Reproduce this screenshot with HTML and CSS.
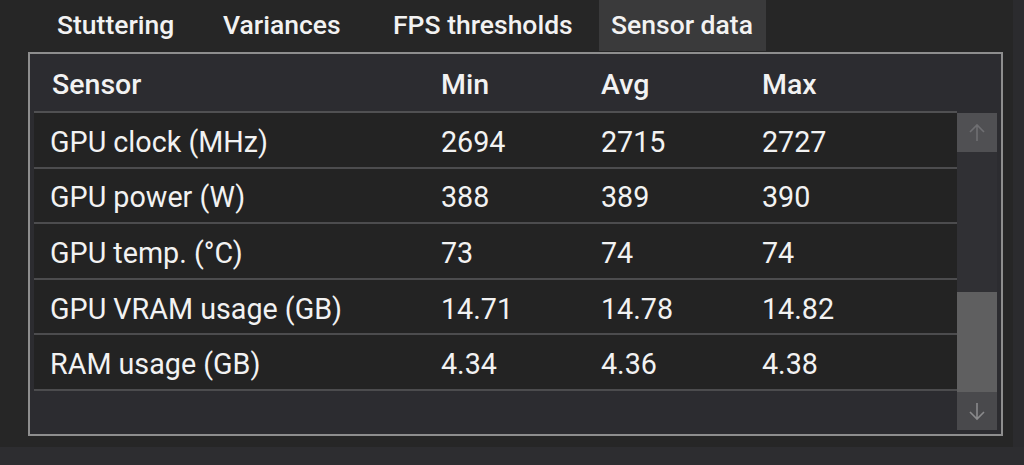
FILE: index.html
```html
<!DOCTYPE html>
<html>
<head>
<meta charset="utf-8">
<link rel="stylesheet" href="styles.css">
</head>
<body>
<div class="page">
  <div class="main">
    <div class="tabs">
      <div class="tab tab-1">Stuttering</div>
      <div class="tab tab-2">Variances</div>
      <div class="tab tab-3">FPS thresholds</div>
      <div class="tab tab-4 active">Sensor data</div>
    </div>
    <div class="box">
      <div class="head">
        <div class="c c-name">Sensor</div>
        <div class="c c-min">Min</div>
        <div class="c c-avg">Avg</div>
        <div class="c c-max">Max</div>
      </div>
      <div class="body">
        <div class="rows">
          <div class="row"><div class="c c-name">GPU clock (MHz)</div><div class="c c-min">2694</div><div class="c c-avg">2715</div><div class="c c-max">2727</div></div>
          <div class="row"><div class="c c-name">GPU power (W)</div><div class="c c-min">388</div><div class="c c-avg">389</div><div class="c c-max">390</div></div>
          <div class="row"><div class="c c-name">GPU temp. (°C)</div><div class="c c-min">73</div><div class="c c-avg">74</div><div class="c c-max">74</div></div>
          <div class="row"><div class="c c-name">GPU VRAM usage (GB)</div><div class="c c-min">14.71</div><div class="c c-avg">14.78</div><div class="c c-max">14.82</div></div>
          <div class="row"><div class="c c-name">RAM usage (GB)</div><div class="c c-min">4.34</div><div class="c c-avg">4.36</div><div class="c c-max">4.38</div></div>
        </div>
        <div class="scrollbar">
          <div class="sb-btn sb-up">
            <svg width="22" height="22" viewBox="0 0 22 22"><path d="M11 19V3M4 10l7-7 7 7" fill="none" stroke="#6f6f72" stroke-width="1.6"/></svg>
          </div>
          <div class="sb-track"></div>
          <div class="sb-thumb"></div>
          <div class="sb-btn sb-down">
            <svg width="22" height="22" viewBox="0 0 22 22"><path d="M11 3v16M4 12l7 7 7-7" fill="none" stroke="#8a8a8c" stroke-width="1.6"/></svg>
          </div>
        </div>
      </div>
    </div>
  </div>
  <div class="side"></div>
</div>
<div class="footer"></div>
</body>
</html>
```
FILE: styles.css
```css
html, body {
  margin: 0;
  padding: 0;
}
body {
  width: 1024px;
  height: 465px;
  overflow: hidden;
  background: #262626;
  color: #f2f2f2;
  font-family: Roboto, "Noto Sans", sans-serif;
  font-size: 28.7px;
}
.page {
  display: flex;
  height: 447px;
}
.main {
  width: 1013px;
  padding-left: 28px;
  box-sizing: border-box;
}
.side {
  flex: 1;
  background: #2b2b2e;
}
.footer {
  height: 18px;
  background: #2d2d30;
}
.tabs {
  display: flex;
  height: 52px;
  padding-left: 17px;
}
.tab {
  box-sizing: border-box;
  padding-left: 12px;
  height: 51px;
  line-height: 49px;
  font-size: 26.5px;
  font-weight: 500;
  white-space: nowrap;
}
.tab-1 { width: 166px; }
.tab-2 { width: 170px; }
.tab-3 { width: 218px; }
.tab-4 { width: 167px; }
.tab.active {
  background: #3a3a3b;
}
.box {
  width: 975px;
  height: 384px;
  box-sizing: border-box;
  border: 2px solid #8e8e8e;
  background: #2c2c30;
  padding: 0 4px 4px 4px;
  display: flex;
  flex-direction: column;
}
.head {
  width: 923px;
  height: 59px;
  box-sizing: border-box;
  border-bottom: 2px solid #505052;
  display: grid;
  grid-template-columns: 391px 160px 161px 1fr;
  align-items: center;
  font-weight: 500;
  font-size: 28.5px;
}
.head .c-name { padding-left: 18px; }
.head .c { padding-top: 4px; }
.c { padding-left: 16px; white-space: nowrap; }
.body {
  display: flex;
  flex: 1;
}
.rows {
  width: 923px;
}
.row {
  height: 55.6px;
  box-sizing: border-box;
  border-bottom: 2px solid #4c4c4e;
  background: #232323;
  display: grid;
  grid-template-columns: 391px 160px 161px 1fr;
  align-items: center;
}
.row .c { padding-top: 4px; }
.scrollbar {
  width: 40px;
  display: flex;
  flex-direction: column;
  background: #303034;
}
.sb-btn {
  display: flex;
  align-items: center;
  justify-content: center;
}
.sb-up {
  height: 39px;
  background: #505053;
}
.sb-track {
  height: 140px;
}
.sb-thumb {
  height: 100px;
  background: #5f5f60;
}
.sb-down {
  flex: 1;
  background: #49494c;
}
```
